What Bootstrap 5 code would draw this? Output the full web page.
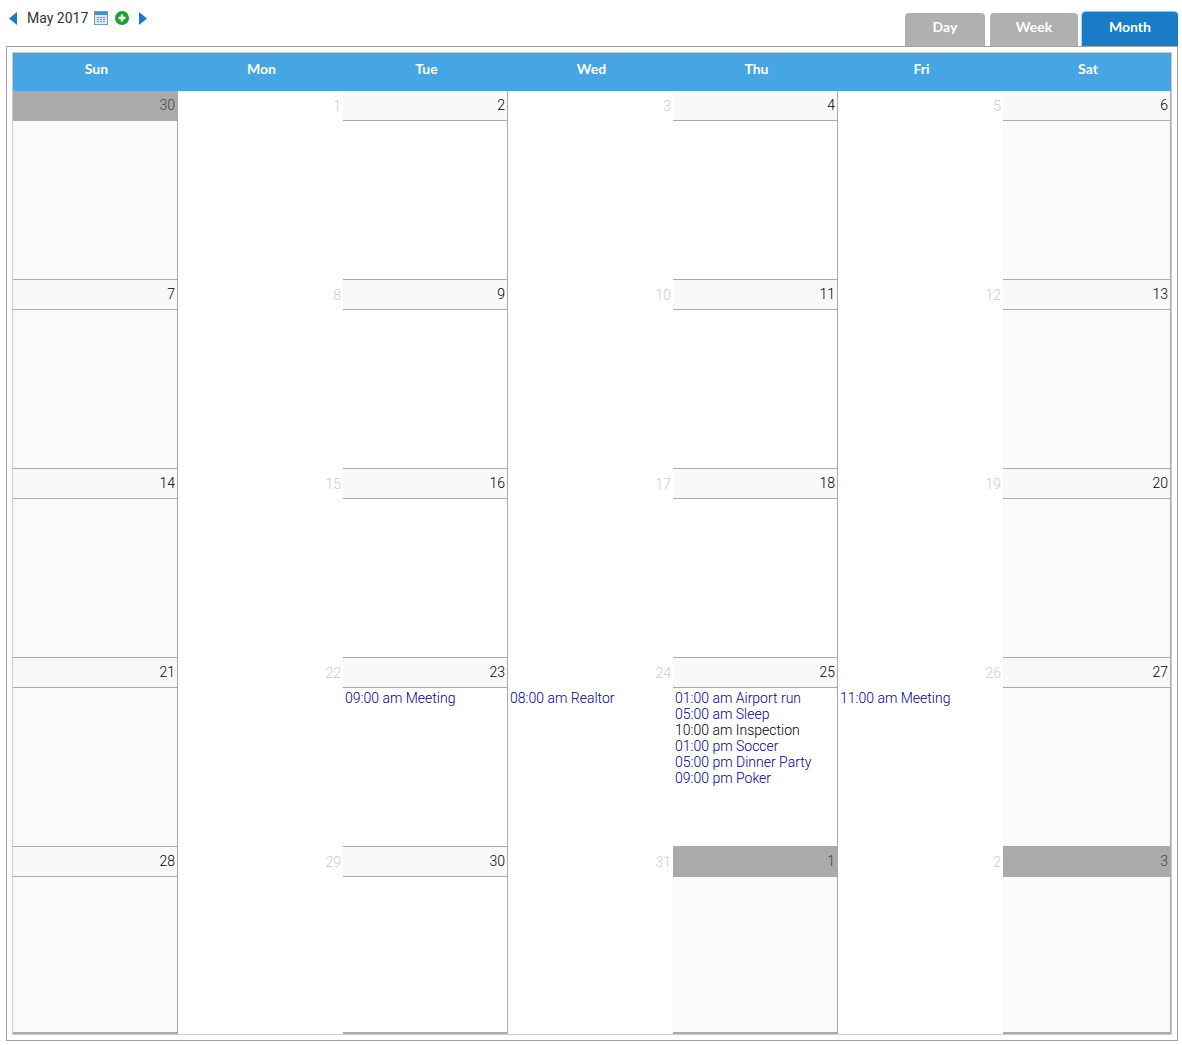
<!DOCTYPE html>
<html lang="en">
<head>
    <meta charset="UTF-8">
    <title>Calendar - May 2017</title>
    <link href="https://cdn.jsdelivr.net/npm/bootstrap@5.3.3/dist/css/bootstrap.min.css" rel="stylesheet">
    <style>
        body { font-family: Roboto, "Liberation Sans", sans-serif; font-weight: 300; font-size: 14px; color: #222; background: #fff; }
        .cal-page { width: 1172px; margin-left: 6px; }
        .cal-top { height: 46px; }
        .cal-title { margin-left: 3px; padding-top: 0; height: 36px; }
        .cal-month { font-size: 14px; font-weight: 400; color: #333; line-height: 14px; margin: 0 6px 0 10px; }
        .cal-tabs { border: 0; gap: 5px; margin-top: 12px; }
        .cal-tabs .nav-link { font-family: Lato, sans-serif; font-weight: 700; font-size: 14px; color: #fff; background: #b0b0b0; border: 0; border-radius: 4px 4px 0 0; height: 33px; margin-top: 1px; padding: 3px 0 0; text-align: center; }
        .tab-day { width: 80px; }
        .tab-week { width: 88px; }
        .cal-tabs .nav-link.active { width: 96px; height: 34px; margin-top: 0; margin-left: -1px; background: #1a7cc7; color: #fff; box-shadow: 0 -1px 1px #7dbdea, -1px 0 1px #a9d4f1; padding-top: 4px; }
        .cal-frame { border: 1px solid #a0a0a0; height: 995px; padding: 5px; }
        .cal-inner { border: 1px solid #ccc; height: 983px; }
        .cal-grid { display: grid; grid-template-columns: repeat(6, 165px) 1fr; }
        .cal-dow { height: 38px; background: #46a5e3; color: #fff; font-family: Lato, sans-serif; font-weight: 700; font-size: 14px; line-height: 32px; padding-left: 2px; text-align: center; }
        .cal-cell { height: 189px; overflow: hidden; }
        .cal-cell.first-row { height: 188px; }
        .cal-cell.last-row { height: 188px; }
        .day-head { height: 31px; padding: 5px 3px 0 0; text-align: right; line-height: 18px; background: #f9f9f9; border-top: 1px solid #aaa; border-bottom: 1px solid #aaa; color: #000; }
        .first-row .day-head { height: 30px; border-top: 0; padding-top: 5px; }
        .cal-cell.lined { border-right: 1px solid #aaa; }
        .cal-cell.lined .day-head { margin-right: -1px; }
        .cal-cell.plain .day-head { background: #fff; border-color: transparent; color: #ccc; padding: 6px 2px 0 0; }
        .day-head.other-month { background: #aaa; border-color: #aaa; color: #444; }
        .cal-cell.shade { background: #fafafa; }
        .cal-cell.lined.last-row { border-bottom: 2px solid #aaa; }
        .day-events { padding: 2px 2px 0; line-height: 16px; color: #00008b; }
        .day-events .ev-dark { color: #000; }
        .cal-add { margin-left: 7px; }
        .cal-next { margin-left: 10px; }
    </style>
</head>
<body>
    <div class="cal-page">
        <div class="cal-top d-flex justify-content-between align-items-start">
            <div class="cal-title d-flex align-items-center">
                <svg width="8" height="13" viewBox="0 0 8 13"><path d="M8 0V13L0 6.500Z" fill="#1a7cc7"/></svg>
                <span class="cal-month">May 2017</span>
                <svg width="14" height="14" viewBox="0 0 14 14">
                    <rect x="0.500" y="0.500" width="13" height="13" fill="#dfe7f0" stroke="#6a9fcd"/>
                    <rect x="1" y="1" width="12" height="3" fill="#4a8ec9"/>
                    <path d="M3 6h2v1H3zM6 6h2v1H6zM9 6h2v1H9zM3 8h2v1H3zM6 8h2v1H6zM9 8h2v1H9zM3 10h2v1H3zM6 10h2v1H6zM9 10h2v1H9z" fill="#7d8ca3"/>
                </svg>
                <svg class="cal-add" width="14" height="14" viewBox="0 0 14 14">
                    <circle cx="7" cy="7" r="7" fill="#17a32a"/>
                    <path d="M5.800 3.500h2.400v2.300h2.300v2.400H8.200v2.300H5.800V8.200H3.500V5.800h2.300z" fill="#fff"/>
                </svg>
                <svg class="cal-next" width="8" height="13" viewBox="0 0 8 13"><path d="M0 0V13L8 6.500Z" fill="#1a7cc7"/></svg>
            </div>
            <ul class="nav nav-tabs cal-tabs">
                <li class="nav-item"><a class="nav-link tab-day" href="#">Day</a></li>
                <li class="nav-item"><a class="nav-link tab-week" href="#">Week</a></li>
                <li class="nav-item"><a class="nav-link active" href="#">Month</a></li>
            </ul>
        </div>

        <div class="cal-frame">
            <div class="cal-inner">
                <div class="cal-grid" id="cal-grid"></div>
            </div>
        </div>
    </div>

    <script src="https://cdn.jsdelivr.net/npm/bootstrap@5.3.3/dist/js/bootstrap.bundle.min.js"></script>
    <script>
        const dias = ['Sun', 'Mon', 'Tue', 'Wed', 'Thu', 'Fri', 'Sat'];
        const numeros = [30,1,2,3,4,5,6, 7,8,9,10,11,12,13, 14,15,16,17,18,19,20, 21,22,23,24,25,26,27, 28,29,30,31,1,2,3];
        const eventos = {
            23: [['09:00 am Meeting']],
            24: [['08:00 am Realtor']],
            25: [['01:00 am Airport run'], ['05:00 am Sleep'], ['10:00 am Inspection', true], ['01:00 pm Soccer'], ['05:00 pm Dinner Party'], ['09:00 pm Poker']],
            26: [['11:00 am Meeting']]
        };
        const grid = document.getElementById('cal-grid');

        dias.forEach(d => {
            const el = document.createElement('div');
            el.className = 'cal-dow';
            el.textContent = d;
            grid.appendChild(el);
        });

        numeros.forEach((n, i) => {
            const col = i % 7;
            const fila = Math.floor(i / 7);
            const fuera = i === 0 || i >= 32;
            const cell = document.createElement('div');
            const clases = ['cal-cell', col % 2 === 0 ? 'lined' : 'plain'];
            if (fila === 0) clases.push('first-row');
            if (fila === 4) clases.push('last-row');
            // fines de semana y dias de otro mes van sombreados
            if (col === 0 || col === 6 || (fuera && col % 2 === 0)) clases.push('shade');
            cell.className = clases.join(' ');
            const lista = (!fuera && fila === 3 && eventos[n]) || [];
            cell.innerHTML = `
                <div class="day-head${fuera && col % 2 === 0 ? ' other-month' : ''}">${n}</div>
                <div class="day-events">${lista.map(e => `<div class="${e[1] ? 'ev-dark' : ''}">${e[0]}</div>`).join('')}</div>`;
            grid.appendChild(cell);
        });
    </script>
</body>
</html>
